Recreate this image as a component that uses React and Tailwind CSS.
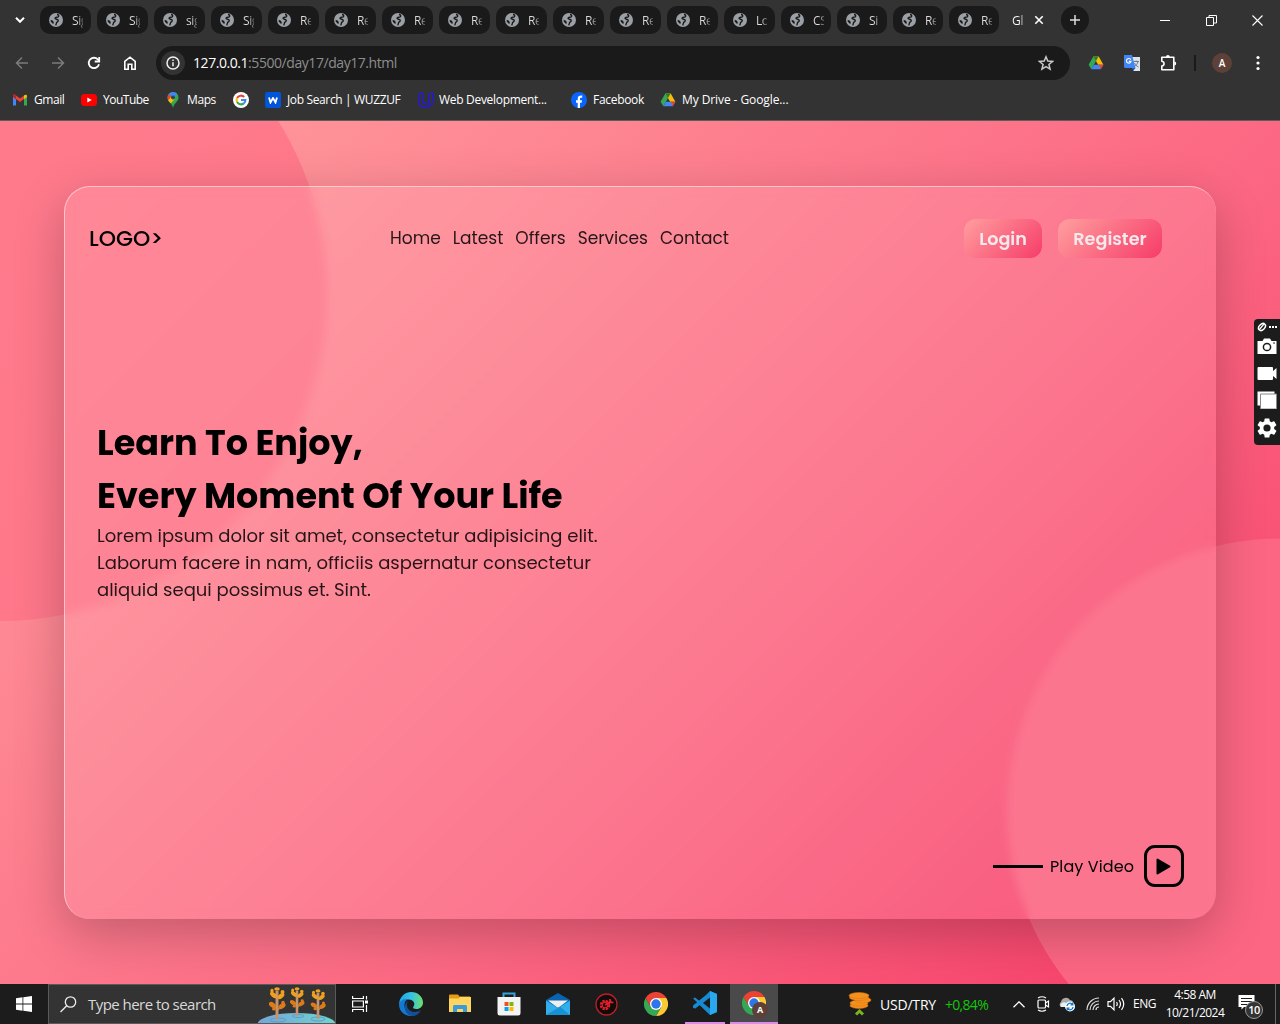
import React from "react";

const tabs = ["Sig", "Sig", "sig", "Sig", "Re", "Re", "Re", "Re", "Re", "Re", "Re", "Re", "Lo", "CS", "Si", "Re", "Re"];

function Globe() {
  return (
    <svg width="14" height="14" viewBox="0 0 14 14" className="shrink-0">
      <circle cx="7" cy="7" r="7" fill="#9aa0a6" />
      <path d="M8 1.500C9.500 1.600 10.300 2.800 9.300 3.800 8.300 4.600 6.500 4 6 5.200 5.800 6.400 8.300 6 9.200 7.200 9.800 8.600 8 8.800 7.600 9.600 7.300 10.600 7.300 11.600 6.600 12.400" fill="none" stroke="#1a1a1a" strokeWidth="1.400" />
      <path d="M1.500 6.800 4 7.800 4.800 9.500 4.300 11.100C2.800 10.300 1.600 8.800 1.500 6.800Z" fill="#1a1a1a" />
    </svg>
  );
}

function Drive({ size = 16 }) {
  return (
    <svg width={size} height={size} viewBox="0 0 16 16">
      <path d="M5.3 1.5 8 6.1 3.3 14.3.6 9.7Z" fill="#34a853" />
      <path d="M10.7 1.5 15.4 9.7h-5.3L5.3 1.5Z" fill="#fbbc04" />
      <path d="M5.3 1.5h5.2L8 6.1Z" fill="#188038" />
      <path d="M5.9 9.7h9.5l-2.7 4.600H3.3Z" fill="#4285f4" />
      <path d="M10.8 9.7h4.6l-2.7 4.600Z" fill="#ea4335" />
    </svg>
  );
}

function Chrome({ size = 24 }) {
  return (
    <svg width={size} height={size} viewBox="0 0 24 24">
      <path d="M12 6h10.4A12 12 0 0 1 12 24l5.2-9Z" fill="#fcc934" />
      <path d="M12 24A12 12 0 0 1 1.6 6l5.2 9 5.2 3 5.2-3Z" fill="#34a853" />
      <path d="M1.6 6A12 12 0 0 1 22.4 6H12L6.8 15Z" fill="#ea4335" />
      <circle cx="12" cy="12" r="6" fill="#fff" />
      <circle cx="12" cy="12" r="4.700" fill="#2a76ea" />
    </svg>
  );
}

function TabStrip() {
  return (
    <div className="flex h-10 items-center">
      <div className="flex w-10 justify-center">
        <svg width="10" height="6" viewBox="0 0 10 6" fill="none" stroke="#fff" strokeWidth="2"><path d="m1 .8 4 4 4-4" /></svg>
      </div>
      <div className="flex gap-1.5">
        {tabs.map((t, i) => (
          <div key={i} className={(i < 13 ? "w-[51px]" : "w-[50px]") + " flex h-7 items-center rounded-[10px] bg-[#1a1a1a] pl-[9px]"}>
            <Globe />
            <span className="ml-[9px] mt-0.5 w-[11px] whitespace-nowrap bg-linear-to-r from-[#dedede] from-50% to-[#dedede]/30 bg-clip-text text-[12px] leading-4 tracking-[-0.4px] text-transparent">{t}</span>
          </div>
        ))}
      </div>
      <span className="ml-[13px] mt-0.5 w-[12px] whitespace-nowrap bg-linear-to-r from-white from-70% to-white/30 bg-clip-text text-[12px] leading-4 tracking-[-0.200px] text-transparent">Gl</span>
      <svg className="ml-[10px]" width="10" height="10" viewBox="0 0 10 10" stroke="#fff" strokeWidth="1.600"><path d="m1.300 1.300 7.400 7.400M8.700 1.300 1.300 8.700" /></svg>
      <div className="ml-[17px] flex size-7 items-center justify-center rounded-full bg-[#1a1a1a]">
        <svg width="10" height="10" viewBox="0 0 10 10" stroke="#dedede" strokeWidth="1.500"><path d="M5 0v10M0 5h10" /></svg>
      </div>
      <svg className="ml-[71px]" width="10" height="11" viewBox="0 0 10 11" stroke="#fff"><path d="M0 5.500h10" /></svg>
      <svg className="ml-9" width="11" height="11" viewBox="0 0 11 11" stroke="#fff" fill="none"><path d="M.5 2.5h7v8h-7ZM3 2.5v-2h7.500v7.500H8" /></svg>
      <svg className="ml-[35px]" width="11" height="11" viewBox="0 0 11 11" stroke="#fff" strokeWidth="1.100"><path d="m.5.500 10 10M10.500.500l-10 10" /></svg>
    </div>
  );
}

function Toolbar() {
  return (
    <div className="flex h-[46px] items-center pl-[14px]">
      <svg width="16" height="16" viewBox="0 0 16 16" fill="none" stroke="#7c7c7c" strokeWidth="1.500"><path d="M14 8H3M8 2.500 2.500 8 8 13.500" /></svg>
      <svg className="ml-5" width="16" height="16" viewBox="0 0 16 16" fill="none" stroke="#7c7c7c" strokeWidth="1.500"><path d="M2 8h11M8 2.500 13.500 8 8 13.500" /></svg>
      <svg className="ml-5" width="16" height="16" viewBox="0 0 16 16" fill="none" stroke="#fff" strokeWidth="1.800"><path d="M13 9.300A5.200 5.200 0 1 1 11.800 4.400L13 5.600" /><path d="M13.200 2v4.500H8.700" /></svg>
      <svg className="ml-5" width="16" height="16" viewBox="0 0 16 16" fill="none" stroke="#fff" strokeWidth="1.600"><path d="M2.800 6.300 8 2.200l5.200 4.100v7.900H9.800V9.300H6.200v4.900H2.800Z" /></svg>
      <div className="ml-[18px] flex h-[34px] w-[914px] items-center rounded-full bg-[#1a1a1a] pl-[5px]">
        <div className="flex size-6 items-center justify-center rounded-full bg-[#333]">
          <svg width="14" height="14" viewBox="0 0 14 14" fill="none" stroke="#f1f1f1"><circle cx="7" cy="7" r="6" strokeWidth="1.500" /><path d="M7 6.200v4M7 3.500v1.500" strokeWidth="1.500" /></svg>
        </div>
        <p className="-mt-px ml-2 w-[830px] text-[14px] tracking-[-0.44px] text-[#8e8e8e]"><span className="text-white">127.0.0.1</span>:5500/day17/day17.html</p>
        <svg className="ml-[15px]" width="16" height="16" viewBox="0 0 16 16" fill="none" stroke="#c9c9c9" strokeWidth="1.500"><path d="m8 1.800 1.800 4.300 4.700.400-3.600 3 1.200 4.600L8 11.600l-4.100 2.500 1.200-4.600-3.600-3 4.700-.400Z" /></svg>
      </div>
      <div className="ml-[18px]"><Drive /></div>
      <svg className="ml-5" width="16" height="16" viewBox="0 0 16 16">
        <path d="M6 2h10v14H9.500Z" fill="#dfe3e8" />
        <path d="M9.500 6.500h5.500M12.200 5.500v1M14 6.500c-.500 2.500-2 4-4 5.500M10.500 8c.800 1.800 2 3 4 4" stroke="#607d8b" fill="none" />
        <path d="M0 0h8l3.500 13H1.500A1.500 1.500 0 0 1 0 11.500Z" fill="#4285f4" /><path d="M8 13h3.500L9 16Z" fill="#1a56c4" />
        <path d="M6.800 4.700A2.300 2.300 0 1 0 7 6.400H4.800" stroke="#fff" strokeWidth="1.100" fill="none" />
      </svg>
      <svg className="ml-5" width="17" height="17" viewBox="0 0 17 17" fill="none" stroke="#fff" strokeWidth="1.600" strokeLinejoin="round"><path d="M1.800 2.300h12v12.500h-12V11c3-.500 3-4.200 0-4.700Z" /><path d="M6 2a1.900 1.900 0 0 1 3.800 0ZM14.300 6.600a1.900 1.900 0 0 1 0 3.800Z" fill="#fff" stroke="none" /></svg>
      <div className="ml-[17px] h-4 w-0.5 bg-[#1a1a1a]" />
      <div className="ml-4 flex size-5 items-center justify-center rounded-full bg-[#5d4037] text-[10px] font-semibold text-white">A</div>
      <svg className="ml-[24px]" width="4" height="16" viewBox="0 0 4 16" fill="#fff"><circle cx="2" cy="2.500" r="1.600" /><circle cx="2" cy="8" r="1.600" /><circle cx="2" cy="13.500" r="1.600" /></svg>
    </div>
  );
}

function Bookmarks() {
  const t = "whitespace-nowrap text-[12px] leading-4";
  return (
    <div className="flex h-[34px] items-center pb-[6px] pl-3 text-white">
      <div className="flex w-[69px] items-center gap-1.5">
        <svg width="16" height="16" viewBox="0 0 16 16"><path d="M1 4v9.500h3V7Z" fill="#4285f4" /><path d="M15 4v9.500h-3V7Z" fill="#34a853" /><path d="M1 4.300V3.800C1 2.500 2.500 2.200 3.300 2.900L8 6.500l4.700-3.600L12 7 8 10 4 7Z" fill="#ea4335" /><path d="M12 3.400c1.300-1.200 3-.700 3 .600V5l-3 2.300Z" fill="#fbbc04" /><path d="M1 4v1l3 2.300V3.400C2.500 2.200 1 2.700 1 4Z" fill="#c5221f" /></svg>
        <span className={t + " tracking-[-0.45px]"}>Gmail</span>
      </div>
      <div className="flex w-[84px] items-center gap-1.5">
        <svg width="16" height="16" viewBox="0 0 16 16"><rect y="2" width="16" height="12" rx="3.500" fill="#f00" /><path d="m6.300 5.500 4.500 2.500-4.500 2.500Z" fill="#fff" /></svg>
        <span className={t + " tracking-[-0.5px]"}>YouTube</span>
      </div>
      <div className="flex w-[68px] items-center gap-1.5">
        <svg width="16" height="16" viewBox="0 0 16 16"><path d="M8 0a5.500 5.500 0 0 0-5.500 5.500C2.500 10 7 10.500 8 16c1-5.500 5.500-6 5.500-10.500A5.500 5.500 0 0 0 8 0Z" fill="#34a853" /><path d="M3.500 2.500A5.500 5.500 0 0 1 12.300 2L6 9Z" fill="#4285f4" /><path d="M3.700 2.200 6.800 4.700 3.200 8.300C2 6 2.500 3.500 3.700 2.200Z" fill="#ea4335" /><path d="M3.200 8.300 6.300 4.700l3.500 2.400L5.800 11.300C4.500 10.300 3.500 9.300 3.200 8.300Z" fill="#fbbc04" /><circle cx="8" cy="5.500" r="2" fill="#29465d" /></svg>
        <span className={t + " tracking-[-0.4px]"}>Maps</span>
      </div>
      <svg width="16" height="16" viewBox="0 0 16 16" fill="none" strokeWidth="2.100"><circle cx="8" cy="8" r="8" fill="#fff" /><path d="M11.200 5A4.400 4.400 0 0 0 4.100 6" stroke="#ea4335" /><path d="M4.100 6a4.400 4.400 0 0 0 0 4" stroke="#fbbc04" /><path d="M4.100 10a4.400 4.400 0 0 0 6.700 1.400" stroke="#34a853" /><path d="M10.800 11.400A4.400 4.400 0 0 0 12.400 8H8" stroke="#4285f4" /></svg>
      <div className="ml-4 flex w-[153px] items-center gap-1.5">
        <div className="flex size-4 items-center justify-center rounded-[2px] bg-[#0055d9]"><svg width="10" height="7" viewBox="0 0 10 7" fill="none" stroke="#fff" strokeWidth="1.800"><path d="m1 .500 1.500 5L5 1l2.500 4.500L9 .500" /></svg></div>
        <span className={t + " tracking-[-0.36px]"}>Job Search | WUZZUF</span>
      </div>
      <div className="flex w-[153px] items-center gap-[5px]">
        <svg width="16" height="16" viewBox="0 0 16 16" fill="none" stroke="#2015ff" strokeWidth="1.200"><path d="M1 2v6.500c0 4 2 6.500 5 6.500 2.500 0 5-1.500 5-5M1 2l3.500-1v8.500c0 2.500 2 2.500 4 1.200M11 10V2l3.800-1v8c0 3-2.500 5-5 6" /></svg>
        <span className={t + " tracking-[-0.3px]"}>Web Development...</span>
      </div>
      <div className="flex w-[89px] items-center gap-1.5">
        <svg width="16" height="16" viewBox="0 0 16 16"><circle cx="8" cy="8" r="8" fill="#0866ff" /><path d="M6.700 16v-5.300H5V8.300h1.700V7c0-2.500 1.200-3.600 3.500-3.600l1 .100v2.200h-.900c-1 0-1.300.500-1.300 1.300v1.300H11l-.400 2.400H9V16Z" fill="#fff" /></svg>
        <span className={t + " tracking-[-0.3px]"}>Facebook</span>
      </div>
      <div className="flex items-center gap-1.5">
        <Drive />
        <span className={t + " tracking-[-0.09px]"}>My Drive - Google...</span>
      </div>
    </div>
  );
}

function Page() {
  const button = "h-[39px] rounded-xl bg-[linear-gradient(135deg,#ff9f9f,#f73c69)] pt-[2px]";
  return (
    <main className="relative flex h-[863px] items-center justify-center overflow-hidden bg-[linear-gradient(135deg,#ff9f9f,#fc6883_60%,#f63b67)] font-[Poppins,Inter,sans-serif]">
      <div className="absolute inset-0 bg-[linear-gradient(135deg,#ff7b8c,#fb6c84)] [clip-path:circle(30%_at_0_20%)]" />
      <div className="absolute inset-0 bg-[#fc6683] [clip-path:circle(25%_at_100%_80%)]" />
      <section className="relative flex h-[733px] w-[1152px] flex-col justify-between rounded-[26px] border-l border-t border-white/50 bg-white/10 pb-8 shadow-[0_15px_50px_rgba(0,0,0,0.23)] backdrop-blur-[5px]">
        <nav className="flex h-[102px] items-center pl-6 pr-[54px]">
          <h2 className="w-[301px] text-[22px] font-medium text-black">LOGO&gt;</h2>
          <div className="flex w-[574px] gap-3 pt-0.5 text-[17px] text-black/85">
            <span>Home</span><span>Latest</span><span>Offers</span><span>Services</span><span>Contact</span>
          </div>
          <div className="flex gap-4 text-[17.600px] font-semibold text-[#f5e9ec]">
            <button className={button + " w-[78px]"}>Login</button>
            <button className={button + " w-[104px]"}>Register</button>
          </div>
        </nav>
        <div className="-mt-[115px] pl-8">
          <h1 className="text-[35px] font-bold leading-[53px] text-black">Learn To Enjoy,<br />Every Moment Of Your Life</h1>
          <p className="text-[18px] leading-[27px] text-black/85">Lorem ipsum dolor sit amet, consectetur adipisicing elit.<br />Laborum facere in nam, officiis aspernatur consectetur<br />aliquid sequi possimus et. Sint.</p>
        </div>
        <div className="flex items-center self-end pr-8">
          <div className="h-[3px] w-[50px] bg-black" />
          <span className="ml-[7px] mt-0.5 w-[84px] whitespace-nowrap text-[16px] tracking-[0.100px] text-black">Play Video</span>
          <div className="ml-[10px] flex h-[42px] w-10 items-center justify-center rounded-[11px] border-[3px] border-black">
            <svg className="-ml-0.5" width="15" height="17" viewBox="0 0 15 17"><path d="M1.500 1.500v14l12-7Z" stroke="#000" strokeWidth="2" strokeLinejoin="round" /></svg>
          </div>
        </div>
      </section>
      <aside className="absolute right-0 top-[198px] flex h-[126px] w-[26px] flex-col items-center rounded-l bg-[#1c1c1c] pt-[3px]">
        <svg width="20" height="10" viewBox="0 0 20 10" fill="none" stroke="#fff"><ellipse cx="5" cy="5" rx="4" ry="2.700" transform="rotate(-45 5 5)" strokeWidth="1.500" /><path d="m2 8 5-6" strokeWidth="1.200" /><path d="M12 5h8" strokeWidth="2" strokeDasharray="2 1" /></svg>
        <svg className="mt-[5px]" width="20" height="18" viewBox="0 0 20 18"><path d="M.500 4h5L7 1.500h6L14.500 4h5v13H.500Z" fill="#fff" /><circle cx="10" cy="10" r="3.600" stroke="#1c1c1c" strokeWidth="1.500" fill="none" /><circle cx="17" cy="6" r=".8" /></svg>
        <svg className="mt-[9px]" width="20" height="18" viewBox="0 0 20 18" fill="#fff"><path d="M2 3h13a1 1 0 0 1 1 1v3l3.500-3v11L16 12v3a1 1 0 0 1-1 1H1.500a1 1 0 0 1-1-1V4a1 1 0 0 1 1-1Z" /></svg>
        <svg className="mt-[9px]" width="20" height="18" viewBox="0 0 20 18"><path d="M.500.500h17v14H.500Z" fill="#fff" /><path d="M3.500 3h16v15h-16Z" fill="#fff" stroke="#888" /></svg>
        <svg className="mt-[9px]" width="20" height="20" viewBox="2 2 20 20" fill="#fff"><path d="M19.140 12.940c.040-.300.060-.610.060-.940s-.020-.640-.070-.940l2.030-1.580a.490.490 0 0 0 .120-.610l-1.920-3.320a.490.490 0 0 0-.590-.220l-2.390.960a7 7 0 0 0-1.620-.940l-.360-2.540a.480.480 0 0 0-.480-.410h-3.840a.480.480 0 0 0-.470.410l-.360 2.540a7 7 0 0 0-1.620.940l-2.390-.960a.480.480 0 0 0-.590.220L2.740 8.870a.480.480 0 0 0 .120.610l2.030 1.580a6 6 0 0 0 0 1.880l-2.030 1.580a.490.490 0 0 0-.120.610l1.920 3.320c.120.220.370.290.590.220l2.390-.960c.500.380 1.030.700 1.620.940l.360 2.540c.050.240.240.410.480.410h3.840c.240 0 .440-.170.470-.410l.360-2.540a7 7 0 0 0 1.620-.940l2.390.960c.220.080.470 0 .590-.220l1.920-3.320a.480.480 0 0 0-.120-.610ZM12 15.600a3.600 3.600 0 1 1 0-7.200 3.600 3.600 0 0 1 0 7.200Z" /></svg>
      </aside>
    </main>
  );
}

function Tree({ x, y, s }) {
  return (
    <g transform={`translate(${x} ${y}) scale(${s})`}>
      <path d="M-1 20-5 15M1 22l4-5" stroke="#a9785c" strokeWidth="1.500" fill="none" />
      <path d="M0 32V3" stroke="#c49372" strokeWidth="3" />
      <g fill="#f0a01d"><ellipse cx="-3.500" cy="7" rx="4" ry="2.200" transform="rotate(40 -3.500 7)" /><ellipse cx="4" cy="8" rx="4" ry="2.200" transform="rotate(-40 4 8)" /><ellipse cx="0" cy="1" rx="2.800" ry="1.800" /><ellipse cx="-5" cy="3" rx="1.700" ry="2.300" /><ellipse cx="5.500" cy="4" rx="2" ry="2" /></g>
      <g fill="#dd7b18"><ellipse cx="-4.500" cy="17" rx="4" ry="2.400" transform="rotate(35 -4.500 17)" /><ellipse cx="5" cy="18" rx="4" ry="2.400" transform="rotate(-35 5 18)" /><ellipse cx="-3" cy="21" rx="2" ry="1.500" /><ellipse cx="6" cy="14.500" rx="1.700" ry="1.700" /></g>
    </g>
  );
}

function Taskbar() {
  return (
    <footer className="flex h-10 items-center bg-[#1c1c1c] text-white">
      <div className="flex w-12 justify-center"><svg width="16" height="16" viewBox="0 0 16 16" fill="#fff"><path d="M0 2.200 6.500 1.300v6.300H0ZM7.300 1.200 16 0v7.600H7.300ZM0 8.400h6.500v6.300L0 13.800ZM7.300 8.400H16V16l-8.700-1.200Z" /></svg></div>
      <div className="flex h-10 w-72 items-center border border-[#5a5a5a] bg-[#333] pl-[11px]">
        <svg width="17" height="17" viewBox="0 0 17 17" fill="none" stroke="#eee" strokeWidth="1.300"><circle cx="10.500" cy="6" r="5.200" /><path d="M6.700 9.800.500 16" /></svg>
        <span className="ml-[11px] w-[170px] whitespace-nowrap text-[15px] tracking-[-0.54px] text-[#d8d8d8]">Type here to search</span>
        <svg width="77" height="38" viewBox="0 0 77 38" className="shrink-0"><defs><linearGradient id="lake"><stop stopColor="#74a5d8" /><stop offset="1" stopColor="#70d4d0" /></linearGradient></defs><ellipse cx="38.500" cy="39" rx="39" ry="11" fill="url(#lake)" /><g fill="none" stroke="#5b9ccb"><ellipse cx="20" cy="35" rx="8" ry="2" /><ellipse cx="40" cy="31" rx="6" ry="1.500" /><ellipse cx="60" cy="34" rx="7" ry="2" /></g><Tree x={19} y={3} s={1} /><Tree x={39} y={3} s={0.87} /><Tree x={60} y={5} s={0.9} /></svg>
      </div>
      <div className="flex w-12 justify-center"><svg width="17" height="16" viewBox="0 0 17 16" fill="none" stroke="#fff" strokeWidth="1.200"><path d="M.600 0v2.500h10.800V0M.600 16v-2.500h10.800V16M.600 5h10.800v6H.600ZM14.500 0v3.500M14.500 9v7" /><path d="M13 4.500h3v3h-3Z" fill="#fff" stroke="none" /></svg></div>
      <div className="ml-[15px] flex items-center">
        <svg width="24" height="24" viewBox="0 0 24 24"><defs><linearGradient id="edge"><stop stopColor="#1ba6e0" /><stop offset=".5" stopColor="#35c1e8" /><stop offset="1" stopColor="#6fe069" /></linearGradient></defs><path d="M.300 10C1.500 4 6.500 0 12 0c7 0 12 5 12 10.500 0 4-3 6.500-6.500 6.500-2.500 0-4-.800-3.300-2 2.800-3.500 0-7.500-4.200-7.500C5 7.500 1 10 .300 14Z" fill="url(#edge)" /><path d="M0 12.500C.500 8.500 5 6.500 9 7.500c-3 1-3.500 3.500-3.500 6 0 5 4.500 9 9.500 10C7 25.500 0 20 0 12.500Z" fill="#1479d0" /><path d="M9 9c-3 5 .500 11 6.500 11 3 0 5-1 6.500-2-2 4-5 6-8.500 6C6 23 3 14 9 9Z" fill="#12509b" /></svg>
        <svg className="ml-[26px]" width="22" height="20" viewBox="0 0 22 20"><path d="M0 1.500A1 1 0 0 1 1 .500h8l1.500 2H21v6H0Z" fill="#e69b14" /><path d="M0 4.500h9.500L11 3h11v15H0Z" fill="#ffd561" /><path d="M4 18v-5.500a1.500 1.500 0 0 1 1.500-1.500h11A1.500 1.500 0 0 1 18 12.500V18h-4v-3H8v3Z" fill="#3b9ad9" /></svg>
        <svg className="ml-[26px]" width="24" height="24" viewBox="0 0 24 24"><path d="M6.500 7V1.500h11V7" fill="none" stroke="#2ea3dd" strokeWidth="2" /><path d="M.500 5h23v16a2.500 2.500 0 0 1-2.500 2.500H3A2.500 2.500 0 0 1 .500 21Z" fill="#f3f3f3" /><path d="M7.500 10h4v4h-4Z" fill="#f25022" /><path d="M12.500 10h4v4h-4Z" fill="#7fba00" /><path d="M7.500 15h4v4h-4Z" fill="#00a4ef" /><path d="M12.500 15h4v4h-4Z" fill="#ffb900" /></svg>
        <svg className="ml-[25px]" width="24" height="24" viewBox="0 0 24 24"><path d="M0 8 12 1l12 7v7H0Z" fill="#0863b1" /><path d="M2 8.500h20L12 16Z" fill="#eee" /><path d="M0 8.500 12 16l12-7.500V23H0Z" fill="#32aee8" /><path d="M0 23 14 14.700 24 23Z" fill="#1591d4" /></svg>
        <svg className="ml-[25px]" width="23" height="23" viewBox="0 0 23 23"><circle cx="11.500" cy="11.500" r="10.500" fill="#110b0b" stroke="#b72026" strokeWidth="1.300" /><circle cx="10" cy="12" r="4.300" fill="none" stroke="#e32029" strokeWidth="2" strokeDasharray="2.400 1" /><circle cx="10" cy="12" r="2.800" fill="none" stroke="#e32029" strokeWidth="1.200" /><path d="m10 12 6.500-4m-1.500-2v3.500h3.500" stroke="#e32029" strokeWidth="1.700" fill="none" /></svg>
        <div className="ml-[26px] h-6"><Chrome /></div>
        <div className="ml-[17px] flex h-10 w-10 items-center justify-center border-b-2 border-[#dc8be8]">
          <svg width="24" height="24" viewBox="0 0 24 24"><path d="m17 0 7 3v18l-7 3L6.500 14 2 17.500 0 16.500v-2L13 4Z" fill="#168bd2" /><path d="m0 7.500 2-1L17 18V6L2 17.500l-2-1L5 12Z" fill="#168bd2" /><path d="m17 6.500-7 5.500 7 5.500Z" fill="#1c1c1c" /><path d="m17 0 7 3v18l-7 3Z" fill="#2aa8ef" /></svg>
        </div>
        <div className="relative ml-[5px] flex h-10 w-12 items-center justify-center border-b-2 border-[#dc8be8] bg-[#4a4a4a]"><Chrome /><span className="absolute left-[22px] top-[18px] flex size-4 items-center justify-center rounded-full bg-[#5d4037] text-[9px] font-bold">A</span></div>
      </div>
      <svg className="ml-[70px]" width="24" height="24" viewBox="0 0 24 24"><g fill="#f4911e" stroke="#d87510" strokeWidth=".5"><ellipse cx="11" cy="13.500" rx="9" ry="3" /><ellipse cx="11" cy="11" rx="9" ry="3" /><ellipse cx="15" cy="8" rx="8" ry="3" /><ellipse cx="11" cy="5.500" rx="9.500" ry="3" /><ellipse cx="11" cy="3.500" rx="10" ry="3" /></g><path d="m8 22.500 3.500-3.500 3.500 3.500" fill="none" stroke="#79b51c" strokeWidth="3" /></svg>
      <span className="ml-2 w-[65px] whitespace-nowrap text-[14px] tracking-[-0.200px]">USD/TRY</span>
      <span className="w-[68px] whitespace-nowrap text-[14px] tracking-[-0.700px] text-[#16c60c]">+0,84%</span>
      <svg width="12" height="7" viewBox="0 0 12 7" fill="none" stroke="#fff" strokeWidth="1.300"><path d="m.500 6.300 5.500-5.500 5.500 5.500" /></svg>
      <svg className="ml-3" width="13" height="16" viewBox="0 0 13 16" fill="none" stroke="#fff" strokeWidth="1.200"><rect x="1" y="4" width="7.500" height="8" rx="1" /><path d="m8.500 7 3-2v6l-3-2M1 2q4-2.500 8 0M1 14q4 2.500 8 0" /></svg>
      <svg className="ml-[8px]" width="18" height="15" viewBox="0 0 18 15"><path d="M3 10a3 3 0 0 1 0-5 5 5 0 0 1 9-2 4 4 0 0 1 2.500 7Z" fill="#aaa" /><path d="M3 10a3 3 0 0 1 1-4c3-2 6 1 7 4Z" fill="#ececec" /><circle cx="12" cy="9.500" r="5" fill="#fff" /><path d="M9 9a3 3 0 0 1 5.500-1.500M15 10a3 3 0 0 1-5.500 1.500M14.800 5.500v2.300h-2.300M9.200 13.500v-2.300h2.300" fill="none" stroke="#0878d7" strokeWidth="1.300" /></svg>
      <svg className="ml-2.5" width="14" height="14" viewBox="0 0 14 14" fill="none" stroke="#ddd" strokeWidth="1.200"><path d="M1 13A12 12 0 0 1 13 1M4 13a9 9 0 0 1 9-9M7 13a6 6 0 0 1 6-6M10 13a3 3 0 0 1 3-3" /></svg>
      <svg className="ml-[7px]" width="18" height="14" viewBox="0 0 18 14" fill="none" stroke="#fff" strokeWidth="1.200"><path d="M1 4.700h2.500L7 1.200v11.600L3.500 9.300H1ZM9.500 5q1.500 2 0 4M12 3q3 4 0 8M14.500 1.200q4.500 5.800 0 11.600" /></svg>
      <span className="ml-2 w-[26px] whitespace-nowrap text-[12px] tracking-[-0.5px]">ENG</span>
      <div className="ml-[6px] w-[60px] whitespace-nowrap text-center text-[12px] leading-[18px] tracking-[-0.5px]"><div>4:58 AM</div><div>10/21/2024</div></div>
      <div className="relative ml-[13px] h-6 w-[26px]"><svg width="17" height="18" viewBox="0 0 17 18"><path d="M.500 3h16v12H6L3.500 17.500V15h-3Z" fill="#fff" /><path d="M3 6.500h11M3 9.500h11M3 12.500h7" stroke="#1c1c1c" /></svg><span className="absolute left-[7px] top-[9px] flex size-[18px] items-center justify-center rounded-full border border-[#999] bg-[#333] text-[11px] font-semibold tracking-[-0.5px]">10</span></div>
      <div className="ml-auto mr-1 h-10 w-px bg-[#666]" />
    </footer>
  );
}

export default function App() {
  return (
    <div className="flex h-[1024px] w-[1280px] flex-col overflow-hidden font-['Open_Sans',sans-serif]">
      <header className="h-[121px] border-b border-[#5d5d5d] bg-[#333]"><TabStrip /><Toolbar /><Bookmarks /></header>
      <Page />
      <Taskbar />
    </div>
  );
}
